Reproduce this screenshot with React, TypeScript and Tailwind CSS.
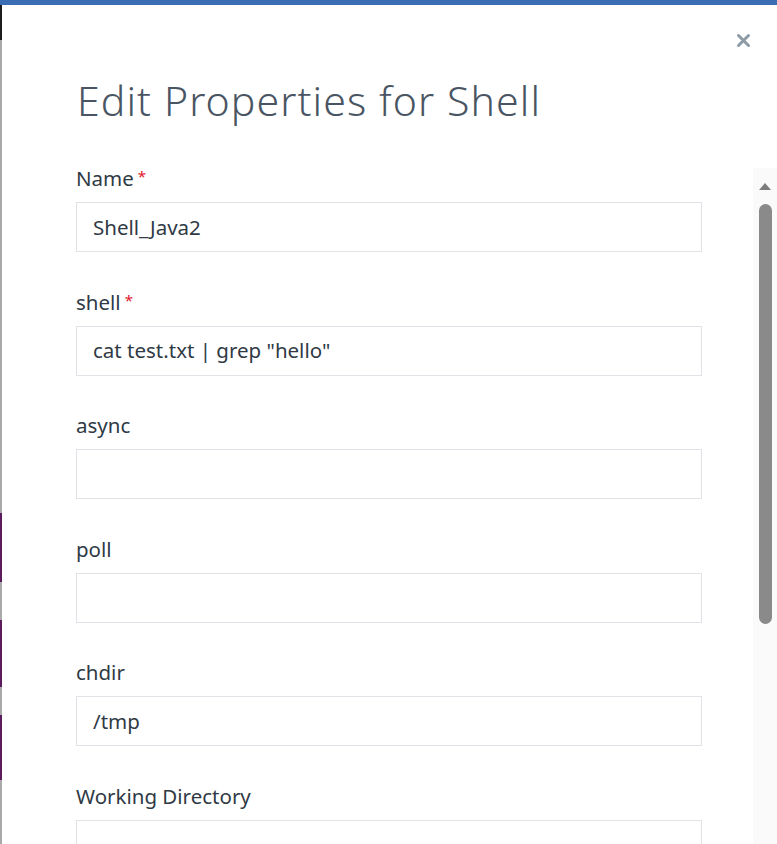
import { ReactNode } from 'react'

const fields: { label: string; value: string; required?: boolean }[] = [
  { label: 'Name', value: 'Shell_Java2', required: true },
  { label: 'shell', value: 'cat test.txt | grep "hello"', required: true },
  { label: 'async', value: '' },
  { label: 'poll', value: '' },
  { label: 'chdir', value: '/tmp' },
  { label: 'Working Directory', value: '' },
]

function Field({ label, value, required }: { label: string; value: string; required?: boolean }) {
  return (
    <div className="mb-[39.6px] shrink-0">
      <label className="flex items-start h-[22px] text-[20.5px] leading-[20px] text-[#2f3a45]">
        {label}
        {required && <span className="ml-[4px] text-[15px] leading-[16px] text-[#e3162b]">*</span>}
      </label>
      <div className="mt-[12px] h-[50px] border border-[#dfe3e8] bg-white px-[16px] flex items-center text-[20.5px] text-[#2f3a45]">
        {value}
      </div>
    </div>
  )
}

function EdgeStrip({ children }: { children?: ReactNode }) {
  return <div className="w-[2px] shrink-0 flex flex-col bg-[#a9a9a9]">{children}</div>
}

export default function App() {
  return (
    <div className="h-[844px] w-[777px] overflow-hidden bg-white flex flex-col" style={{ fontFamily: '"Noto Sans", "Open Sans", sans-serif' }}>
      {/* top bar */}
      <div className="h-[5px] shrink-0 bg-[#3b6db3]" />

      <div className="flex flex-1 min-h-0">
        {/* window edge behind the modal */}
        <EdgeStrip>
          <div className="h-[35px] bg-[#1c1c1c]" />
          <div className="h-[473px]" />
          <div className="h-[69px] bg-[#5b1b5e]" />
          <div className="h-[38px]" />
          <div className="h-[67px] bg-[#5b1b5e]" />
          <div className="h-[28px]" />
          <div className="h-[65px] bg-[#5b1b5e]" />
        </EdgeStrip>

        {/* modal */}
        <div className="relative flex-1 flex flex-col bg-white">
          <button className="absolute right-[22px] top-[24px] p-[4px] text-[#8d9ba7]" aria-label="Close">
            <svg width="15" height="15" viewBox="0 0 15 15" fill="none" stroke="currentColor" strokeWidth="3" strokeLinecap="round">
              <path d="M2.5 2.5l10 10M12.5 2.5l-10 10" />
            </svg>
          </button>

          <div className="h-[163px] shrink-0 pl-[75px] pt-[71px]">
            <h1 className="text-[41px] leading-[48px] font-light text-[#4a5563] tracking-[1.1px]">Edit Properties for Shell</h1>
          </div>

          <div className="flex flex-1 min-h-0">
            <form className="ml-[74px] w-[626px] flex flex-col">
              {fields.map((f) => (
                <Field key={f.label} {...f} />
              ))}
            </form>
            <div className="flex-1" />
            {/* scrollbar */}
            <div className="w-[24px] shrink-0 bg-[#fafafa] flex flex-col items-center pt-[15px]">
              <div className="w-0 h-0 border-l-[6px] border-r-[6px] border-b-[7px] border-l-transparent border-r-transparent border-b-[#7c7c7c]" />
              <div className="mt-[14px] w-[13px] h-[420px] rounded-full bg-[#8a8a8a]" />
            </div>
          </div>
        </div>
      </div>
    </div>
  )
}
